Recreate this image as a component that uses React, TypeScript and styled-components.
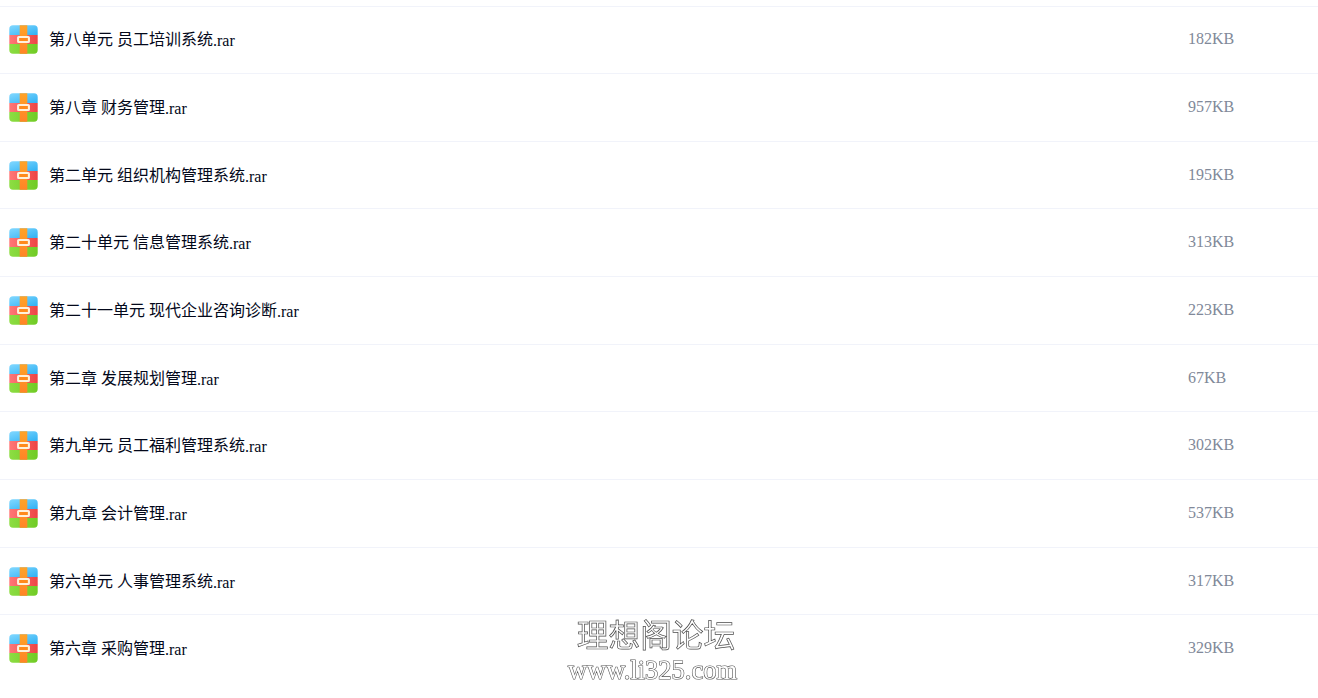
import React from 'react';
import styled, { createGlobalStyle } from 'styled-components';

const GlobalStyle = createGlobalStyle`
  * {
    box-sizing: border-box;
  }

  body {
    margin: 0;
    background-color: #ffffff;
    font-family: 'Liberation Serif', 'Noto Sans CJK SC', serif;
    font-size: 16px;
    overflow: hidden;
  }
`;

const Page = styled.div`
  position: relative;
  height: 698px;
  padding-top: 5.5625px;
  overflow: hidden;
`;

const List = styled.ul`
  list-style: none;
  margin: 0;
  padding: 0;
`;

const Row = styled.li`
  display: flex;
  align-items: center;
  height: 67.641px;
  padding: 0 0 0 9px;
  border-top: 1px solid #f1f3fa;
`;

const FileIcon = styled.svg`
  flex: none;
  width: 29px;
  height: 29px;
  margin-top: 0.1px;
  margin-right: 11px;
`;

const FileName = styled.span`
  flex: 1;
  padding-top: 1.2px;
  color: #03081a;
  line-height: 24px;
  white-space: nowrap;
`;

const Extension = styled.span`
  line-height: 1;
  vertical-align: -1px;
`;

const FileSize = styled.span`
  width: 130px;
  padding-bottom: 0.8px;
  color: #818999;
  line-height: 24px;
`;

const Watermark = styled.div`
  position: absolute;
  left: 552px;
  top: 618px;
  width: 201px;
  text-align: center;
  color: #ffffff;
  white-space: nowrap;
  will-change: transform;
`;

const WatermarkName = styled.div`
  padding-left: 7px;
  font-size: 31.7px;
  line-height: 37px;
  -webkit-text-stroke: 0.7px #4c4c4c;
`;

const WatermarkUrl = styled.div`
  font-size: 26.5px;
  line-height: 30px;
  -webkit-text-stroke: 1.2px #555555;
  paint-order: stroke fill;
`;

interface FileItem {
  name: string;
  size: string;
}

const files: FileItem[] = [
  { name: '第八单元 员工培训系统', size: '182KB' },
  { name: '第八章 财务管理', size: '957KB' },
  { name: '第二单元 组织机构管理系统', size: '195KB' },
  { name: '第二十单元 信息管理系统', size: '313KB' },
  { name: '第二十一单元 现代企业咨询诊断', size: '223KB' },
  { name: '第二章 发展规划管理', size: '67KB' },
  { name: '第九单元 员工福利管理系统', size: '302KB' },
  { name: '第九章 会计管理', size: '537KB' },
  { name: '第六单元 人事管理系统', size: '317KB' },
  { name: '第六章 采购管理', size: '329KB' },
];

const ArchiveIcon: React.FC = () => (
  <FileIcon viewBox="0 0 29 29">
    <path d="M4 0.3h21a3.7 3.7 0 0 1 3.7 3.7v6H0.3V4A3.7 3.7 0 0 1 4 0.3z" fill="url(#archiveBlue)" />
    <path d="M0.3 10h28.4v9H0.3z" fill="url(#archiveRed)" />
    <path d="M0.3 19h28.4v6a3.7 3.7 0 0 1-3.7 3.7H4A3.7 3.7 0 0 1 0.3 25z" fill="url(#archiveGreen)" />
    <path d="M10.7 0.3h7.6v28.4h-7.6z" fill="url(#archiveOrange)" />
    <rect x="9.1" y="12" width="10.8" height="5" rx="0.6" fill="#ff8a1c" stroke="#fff1dc" strokeWidth="2.1" />
  </FileIcon>
);

const IconGradients: React.FC = () => (
  <svg width="0" height="0" style={{ position: 'absolute' }}>
    <defs>
      <linearGradient id="archiveBlue" x1="0" y1="0" x2="1" y2="1">
        <stop offset="0" stopColor="#82d8ff" />
        <stop offset="1" stopColor="#30b1f3" />
      </linearGradient>
      <linearGradient id="archiveRed">
        <stop offset="0" stopColor="#ff7777" />
        <stop offset="1" stopColor="#ed4545" />
      </linearGradient>
      <linearGradient id="archiveGreen">
        <stop offset="0" stopColor="#8ddd43" />
        <stop offset="1" stopColor="#70cb25" />
      </linearGradient>
      <linearGradient id="archiveOrange" x1="0" y1="0" x2="0" y2="1">
        <stop offset="0" stopColor="#ffa328" />
        <stop offset="1" stopColor="#ff8426" />
      </linearGradient>
    </defs>
  </svg>
);

const App: React.FC = () => {
  return (
    <Page>
      <GlobalStyle />
      <IconGradients />
      <List>
        {files.map((file) => (
          <Row key={file.name}>
            <ArchiveIcon />
            <FileName>
              {file.name}
              <Extension>.rar</Extension>
            </FileName>
            <FileSize>{file.size}</FileSize>
          </Row>
        ))}
      </List>
      <Watermark>
        <WatermarkName>理想阁论坛</WatermarkName>
        <WatermarkUrl>www.li325.com</WatermarkUrl>
      </Watermark>
    </Page>
  );
};

export default App;
